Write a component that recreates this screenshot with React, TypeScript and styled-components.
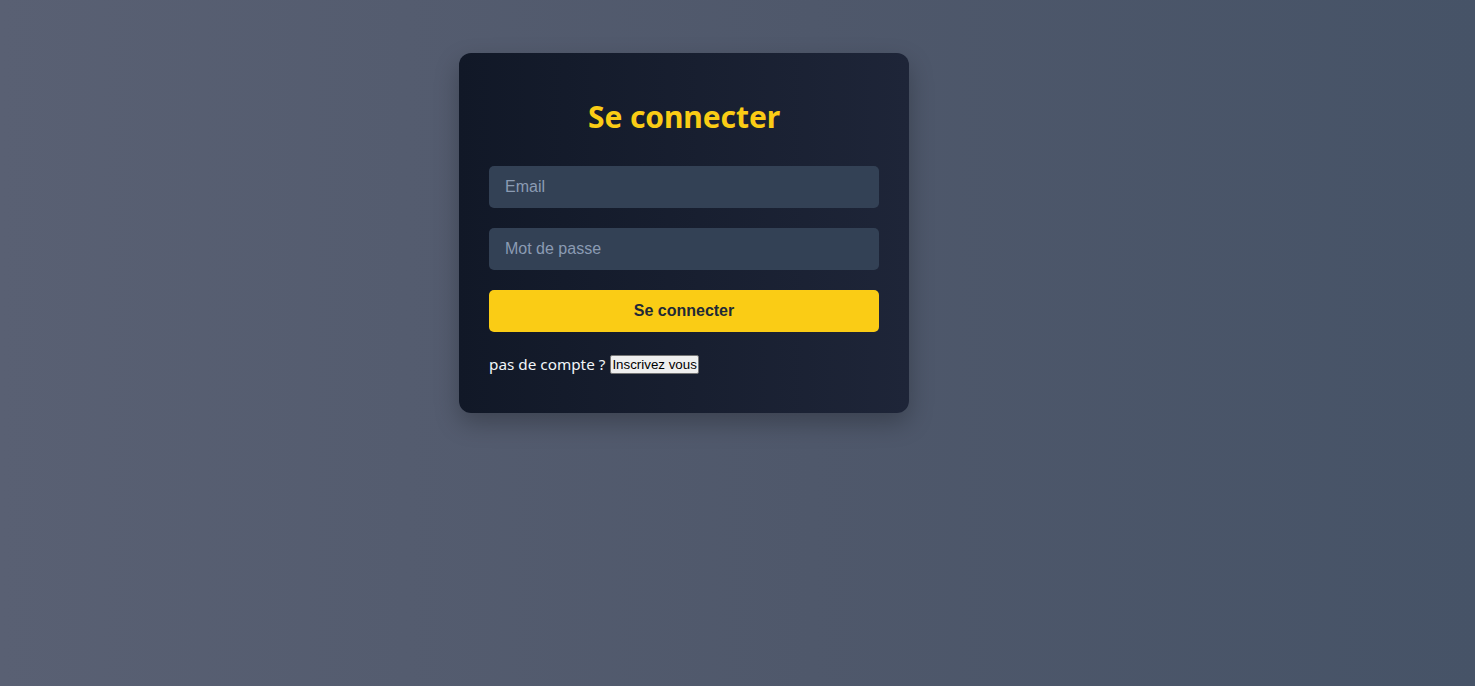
import React from "react";
import styled, { createGlobalStyle } from "styled-components";

const Global = createGlobalStyle`
  html, body { margin: 0; padding: 0; height: 100%; }
  body {
    font-family: "Noto Sans", "Open Sans", sans-serif;
    background: linear-gradient(90deg, #596073 0%, #4f586b 55%, #465367 100%);
    min-height: 686px;
  }
  #root { min-height: 686px; }
`;

const Page = styled.div`
  display: flex;
  justify-content: center;
  padding-top: 53px;
  padding-right: 107px;
  min-height: 686px;
  box-sizing: border-box;
`;

const Card = styled.div`
  width: 450px;
  box-sizing: border-box;
  padding: 30px 30px 30px;
  border-radius: 12px;
  background: linear-gradient(90deg, #111827 0%, #1e2538 100%);
  box-shadow: 0 10px 25px rgba(0, 0, 0, 0.25);
  align-self: flex-start;
`;

const Title = styled.h2`
  margin: 15px 0 30px;
  text-align: center;
  color: #facc15;
  font-family: "Noto Sans", "Open Sans", sans-serif;
  font-weight: 700;
  font-size: 30px;
  line-height: 38px;
  letter-spacing: -0.1px;
`;

const Form = styled.form`
  display: flex;
  flex-direction: column;
  gap: 20px;
`;

const Input = styled.input`
  height: 42px;
  box-sizing: border-box;
  border: none;
  border-radius: 5px;
  background: #334155;
  padding: 0 16px;
  color: #e2e8f0;
  font-family: "Liberation Sans", Arial, sans-serif;
  font-size: 16px;
  outline: none;
  &::placeholder { color: #8b9bb3; }
`;

const Submit = styled.button`
  height: 42px;
  border: none;
  border-radius: 5px;
  background: #facc15;
  color: #1f2937;
  font-family: "Liberation Sans", Arial, sans-serif;
  font-weight: 700;
  font-size: 16px;
  cursor: pointer;
`;

const Footer = styled.p`
  margin: 20px 0 7px;
  color: #f1f5f9;
  font-family: "Noto Sans", "Open Sans", sans-serif;
  font-size: 15.3px;
  line-height: 24px;
  display: flex;
  align-items: center;
  gap: 5px;
`;

const LinkButton = styled.button`
  font-family: "Liberation Sans", Arial, sans-serif;
  font-size: 13.333px;
  line-height: 15px;
  padding: 1px 1px;
  background: #efefef;
  color: #000;
  border: 1px solid #767676;
  border-radius: 2px;
`;

export default function App() {
  return (
    <>
      <Global />
      <Page>
        <Card>
          <Title>Se connecter</Title>
          <Form onSubmit={(e) => e.preventDefault()}>
            <Input type="email" placeholder="Email" />
            <Input type="password" placeholder="Mot de passe" />
            <Submit type="submit">Se connecter</Submit>
          </Form>
          <Footer>
            pas de compte ?<LinkButton type="button">Inscrivez vous</LinkButton>
          </Footer>
        </Card>
      </Page>
    </>
  );
}
